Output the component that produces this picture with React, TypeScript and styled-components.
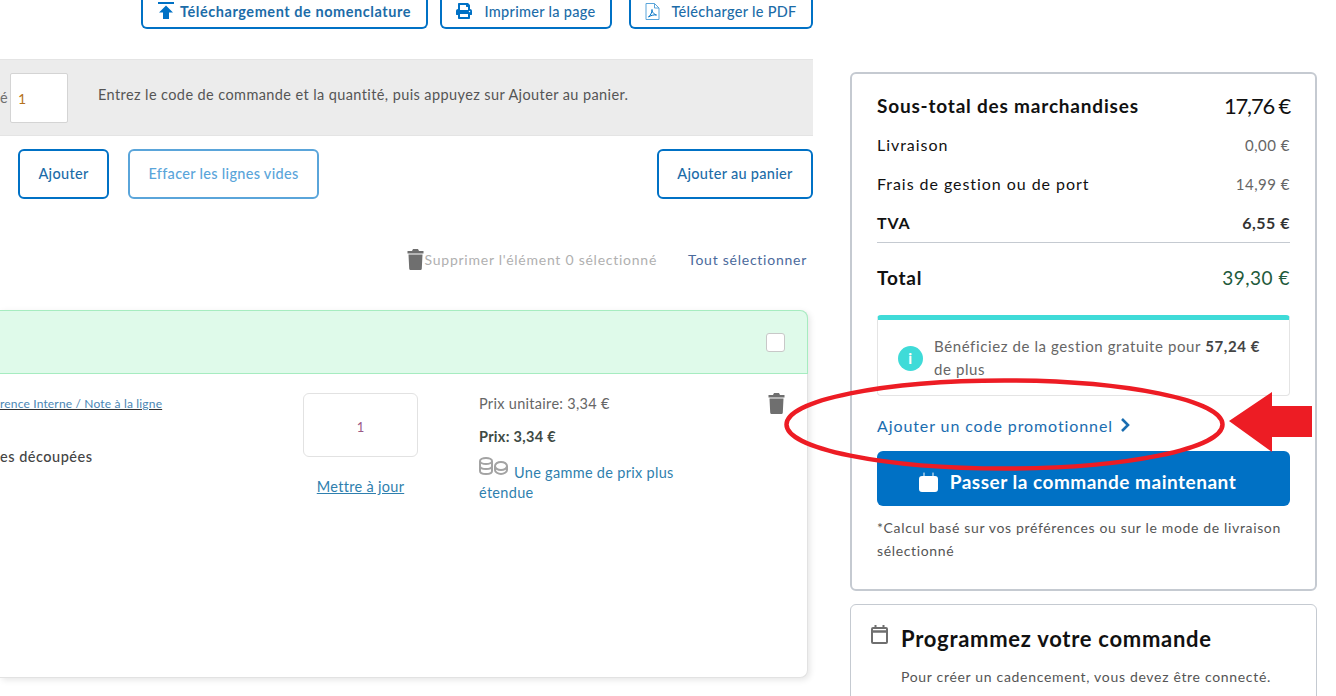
import React from "react";
import styled, { createGlobalStyle } from "styled-components";
import { FaPrint } from "react-icons/fa";

const Colors = {
  blue: "#0071c5",
  blue_light: "#5aa5da",
  text: "#3c3c3c",
  grey: "#6f6f6f",
  panel: "#c5cad1",
  black: "#111",
};

const GlobalStyle = createGlobalStyle`
  html, body {
    margin: 0;
    padding: 0;
    background: #fff;
    overflow: hidden;
  }
  body {
    font-family: "Lato", "Liberation Sans", sans-serif;
    color: ${Colors.text};
  }
`;

const Page = styled.div`
  position: relative;
  width: 1336px;
  height: 696px;
  overflow: hidden;
`;

const Columns = styled.div`
  display: grid;
  grid-template-columns: 813px 467px;
  column-gap: 37px;
  margin-top: -3px;
`;

const LeftColumn = styled.div`
  display: flex;
  flex-direction: column;
`;

const TopActions = styled.div`
  display: flex;
  justify-content: flex-end;
  height: 32px;
`;

const OutlineButton = styled.button<{ $width: number; $gap?: number; $faded?: boolean }>`
  display: flex;
  align-items: center;
  justify-content: center;
  gap: ${(p) => p.$gap ?? 0}px;
  box-sizing: border-box;
  width: ${(p) => p.$width}px;
  height: 50px;
  padding: 0 0 2px;
  background: #fff;
  border: 2px solid ${(p) => (p.$faded ? Colors.blue_light : Colors.blue)};
  border-radius: 6px;
  color: ${(p) => (p.$faded ? Colors.blue_light : "#1c6ca8")};
  font-family: inherit;
  font-size: 14.5px;
  font-weight: 500;
  letter-spacing: 0.3px;
`;

const TopButton = styled(OutlineButton)<{ $left: number; $strong?: boolean }>`
  height: 32px;
  margin-left: ${(p) => p.$left}px;
  border-top: 0;
  border-radius: 0 0 6px 6px;
  font-weight: ${(p) => (p.$strong ? 700 : 500)};
  letter-spacing: ${(p) => (p.$strong ? 0.55 : 0.3)}px;
`;

const QuickBand = styled.div`
  display: flex;
  align-items: center;
  box-sizing: border-box;
  height: 77px;
  margin-top: 30px;
  background: #ececec;
  border-top: 1px solid #e4e4e4;
  border-bottom: 1px solid #e4e4e4;
  font-size: 14.5px;
  letter-spacing: 0.4px;
`;

const ClippedLabel = styled.span`
  width: 10px;
  color: ${Colors.grey};
`;

const QuantityField = styled.div`
  box-sizing: border-box;
  display: flex;
  align-items: center;
  width: 58px;
  height: 50px;
  padding: 2px 0 0 7px;
  background: #fff;
  border: 1px solid #d4d4d4;
  border-radius: 2px;
  color: #b5721c;
  font-size: 14px;
`;

const BandHint = styled.span`
  margin-left: 30px;
  margin-top: -6px;
  color: #555;
`;

const ActionRow = styled.div`
  display: flex;
  align-items: center;
  gap: 19px;
  height: 50px;
  margin-top: 13px;
  padding-left: 18px;
`;

const PushRight = styled.div`
  margin-left: auto;
`;

const SelectionRow = styled.div`
  display: flex;
  align-items: center;
  height: 24px;
  margin-top: 48px;
  padding-right: 6px;
  justify-content: flex-end;
  font-size: 14px;
  letter-spacing: 0.75px;
`;

const DeleteSelected = styled.span`
  display: flex;
  align-items: center;
  gap: 1px;
  color: #b0b0b0;
`;

const SelectAll = styled.span`
  margin-left: 31px;
  color: #4b6a9c;
`;

const ItemCard = styled.div`
  box-sizing: border-box;
  width: 808px;
  height: 368px;
  margin-top: 39px;
  background: #fff;
  border-right: 1px solid #e2e2e2;
  border-bottom: 1px solid #e2e2e2;
  border-radius: 0 8px 8px 0;
  box-shadow: 2px 2px 6px rgba(0, 0, 0, 0.1);
`;

const CardHeader = styled.div`
  box-sizing: border-box;
  display: flex;
  align-items: center;
  justify-content: flex-end;
  height: 64px;
  margin-right: -1px;
  padding-right: 22px;
  background: #dffaea;
  border: 1px solid #a6ecc0;
  border-left: 0;
  border-radius: 0 8px 0 0;
`;

const Checkbox = styled.div`
  box-sizing: border-box;
  width: 19px;
  height: 19px;
  background: #fff;
  border: 1px solid #c8c8c8;
  border-radius: 3px;
`;

const CardBody = styled.div`
  display: grid;
  grid-template-columns: 303px 115px 1fr auto;
  padding: 19px 22px 0 0;
`;

const DescriptionCol = styled.div`
  display: flex;
  flex-direction: column;
`;

const NoteLink = styled.span`
  padding-top: 1px;
  font-size: 12px;
  line-height: 20px;
  letter-spacing: 0.17px;
  color: #4a86b4;
  text-decoration: underline;
  text-decoration-color: #333;
`;

const ItemName = styled.span`
  margin-top: 33px;
  font-size: 14.5px;
  font-weight: 500;
  line-height: 20px;
  letter-spacing: 0.5px;
  color: #444;
`;

const QtyCol = styled.div`
  display: flex;
  flex-direction: column;
  align-items: center;
`;

const QtyBox = styled.div`
  box-sizing: border-box;
  display: flex;
  align-items: center;
  justify-content: center;
  width: 115px;
  height: 64px;
  padding-top: 3px;
  border: 1px solid #e2e2e2;
  border-radius: 6px;
  color: #9b5a86;
  font-size: 13px;
`;

const UpdateLink = styled.span`
  margin-top: 20px;
  font-size: 14.5px;
  line-height: 20px;
  letter-spacing: 0.3px;
  color: #2f7fae;
  text-decoration: underline;
`;

const PriceCol = styled.div`
  display: flex;
  flex-direction: column;
  width: 216px;
  padding: 1px 0 0 61px;
  font-size: 14.5px;
  letter-spacing: 0.3px;
  line-height: 20px;
`;

const UnitPrice = styled.span`
  color: #666;
`;

const LinePrice = styled.span`
  margin-top: 13px;
  font-weight: 700;
  color: #3e4a44;
`;

const RangeLink = styled.span`
  margin-top: 10px;
  color: #2f7fae;
  svg {
    margin-right: 6px;
    vertical-align: 3px;
  }
`;

const TrashCol = styled.div`
  margin-left: auto;
`;

const RightColumn = styled.div`
  display: flex;
  flex-direction: column;
  gap: 13px;
  margin-top: 75px;
`;

const SummaryPanel = styled.div`
  box-sizing: border-box;
  height: 519px;
  padding: 15px 25px 0;
  border: 2px solid ${Colors.panel};
  border-radius: 6px;
`;

const Row = styled.div<{ $height: number; $line?: boolean; $after?: number }>`
  box-sizing: border-box;
  display: flex;
  align-items: center;
  justify-content: space-between;
  height: ${(p) => p.$height}px;
  margin-bottom: ${(p) => p.$after ?? 0}px;
  ${(p) => p.$line && `border-bottom: 1px solid ${Colors.panel}; padding-bottom: 1px;`}
`;

const Label = styled.span<{ $bold?: boolean; $size: number }>`
  font-size: ${(p) => p.$size}px;
  font-weight: ${(p) => (p.$bold ? 700 : 400)};
  letter-spacing: ${(p) => (p.$bold ? 0.8 : 0.95)}px;
  color: ${Colors.black};
`;

const Amount = styled.span<{ $size: number; $bold?: boolean; $color?: string; $tight?: boolean }>`
  font-size: ${(p) => p.$size}px;
  font-weight: ${(p) => (p.$bold ? 700 : 400)};
  letter-spacing: ${(p) => (p.$tight ? -1.2 : 0.5)}px;
  color: ${(p) => p.$color ?? "#333"};
`;

const InfoBox = styled.div`
  box-sizing: border-box;
  display: flex;
  align-items: center;
  gap: 11px;
  height: 81px;
  margin-top: 4px;
  padding: 1px 20px 0;
  border: 1px solid #e4e4e4;
  border-top: 5px solid #3fdbd8;
  border-radius: 4px;
  font-size: 15px;
  line-height: 23px;
  letter-spacing: 0.6px;
  color: #666;
  b {
    color: #444;
  }
`;

const InfoDot = styled.span`
  flex: none;
  display: flex;
  align-items: center;
  justify-content: center;
  width: 25px;
  height: 25px;
  border-radius: 50%;
  background: #3fdbd8;
  color: #fff;
  font-size: 15px;
  font-weight: 700;
`;

const PromoLink = styled.div`
  box-sizing: border-box;
  display: flex;
  align-items: center;
  gap: 7px;
  height: 55px;
  padding-top: 3px;
  font-size: 16px;
  letter-spacing: 0.9px;
  color: #1a6db0;
`;

const CheckoutButton = styled.button`
  display: flex;
  align-items: center;
  justify-content: center;
  gap: 12px;
  width: 100%;
  height: 55px;
  padding: 6px 12px 0 0;
  background: ${Colors.blue};
  border: 0;
  border-radius: 6px;
  color: #fff;
  font-family: inherit;
  font-size: 19px;
  font-weight: 700;
  letter-spacing: 0.5px;
`;

const Footnote = styled.p`
  margin: 10px 0 0;
  font-size: 14px;
  line-height: 23px;
  letter-spacing: 0.65px;
  color: #555;
`;

const SchedulePanel = styled.div`
  box-sizing: border-box;
  display: flex;
  gap: 13px;
  height: 130px;
  padding: 20px 20px 0;
  border: 1px solid ${Colors.panel};
  border-radius: 6px;
`;

const ScheduleTitle = styled.h2`
  margin: 1px 0 0;
  font-size: 22px;
  font-weight: 700;
  line-height: 26px;
  letter-spacing: 0.72px;
  color: ${Colors.black};
`;

const ScheduleText = styled.p`
  margin: 15px 0 0;
  font-size: 14px;
  line-height: 20px;
  letter-spacing: 0.68px;
  color: #555;
`;

const AnnotationLayer = styled.svg`
  position: absolute;
  inset: 0;
  pointer-events: none;
`;

const UploadIcon = () => (
  <svg width="17" height="18" viewBox="0 0 17 18" fill={Colors.blue}>
    <rect x="0" y="0" width="16" height="2" />
    <path d="M8 3.500 15 10.500H11V17H5V10.500H1Z" />
  </svg>
);

const PdfIcon = () => (
  <svg width="15" height="17" viewBox="0 0 15 17" fill="none" stroke={Colors.blue_light} strokeWidth="1">
    <path d="M1 .5H9.500L14 5V16.500H1Z" />
    <path d="M9.500 .5V5H14" />
    <path d="M3.500 14C6 12 7.500 8 7 6.500 6.500 8.500 9 11.500 11.500 12 9 11.500 5.500 12.500 3.500 14Z" stroke={Colors.blue} />
  </svg>
);

const TrashIcon = () => (
  <svg width="17" height="21" viewBox="0 0 17 21" fill={Colors.grey}>
    <path d="M6 0H11L12 2H16.500V4.500H.5V2H5Z" />
    <path d="M1.500 5.500H15.500L14.800 19.500C14.800 20.500 14 21 13 21H4C3 21 2.200 20.500 2.200 19.500Z" />
  </svg>
);

const CoinsIcon = () => (
  <svg width="29" height="18" viewBox="0 0 29 18" fill="none" stroke="#a3a3a3" strokeWidth="2">
    <ellipse cx="7" cy="4" rx="6" ry="3" />
    <path d="M1 4V14C1 16 4 17 7 17 10 17 13 16 13 14V4M1 9C1 11 4 12 7 12 10 12 13 11 13 9" />
    <ellipse cx="22" cy="9" rx="6" ry="4" />
    <path d="M16 9V13C16 15 19 17 22 17 25 17 28 15 28 13V9" />
  </svg>
);

const CalendarIcon = () => (
  <svg width="17" height="19" viewBox="0 0 17 19" fill="none" stroke="#6f6f6f" strokeWidth="2">
    <rect x="1" y="3" width="15" height="15" rx="1" />
    <path d="M1 6.500H16" strokeWidth="2.500" />
    <path d="M4.500 0V3M12.500 0V3" />
  </svg>
);

const BagIcon = () => (
  <svg width="19" height="20" viewBox="0 0 19 20" fill="#fff">
    <path d="M3 4H4.500V1C4.500 .4 5.500 .4 5.500 1V4H13.500V1C13.500 .4 14.500 .4 14.500 1V4H16C18 4 19 5 19 7V17C19 19 18 20 16 20H3C1 20 0 19 0 17V7C0 5 1 4 3 4Z" />
  </svg>
);

const ChevronIcon = () => (
  <svg width="10" height="14" viewBox="0 0 10 14" fill="none" stroke="#1a6db0" strokeWidth="2.600">
    <path d="M2 1 8 7 2 13" />
  </svg>
);

const App = () => {
  return (
    <Page>
      <GlobalStyle />
      <Columns>
        <LeftColumn>
          <TopActions>
            <TopButton $width={287} $left={0} $gap={5} $strong>
              <UploadIcon />
              Téléchargement de nomenclature
            </TopButton>
            <TopButton $width={172} $left={12} $gap={12}>
              <FaPrint size={16} color={Colors.blue} />
              Imprimer la page
            </TopButton>
            <TopButton $width={184} $left={17} $gap={11}>
              <PdfIcon />
              Télécharger le PDF
            </TopButton>
          </TopActions>

          <QuickBand>
            <ClippedLabel>é</ClippedLabel>
            <QuantityField>1</QuantityField>
            <BandHint>Entrez le code de commande et la quantité, puis appuyez sur Ajouter au panier.</BandHint>
          </QuickBand>

          <ActionRow>
            <OutlineButton $width={91}>Ajouter</OutlineButton>
            <OutlineButton $width={191} $faded>
              Effacer les lignes vides
            </OutlineButton>
            <PushRight>
              <OutlineButton $width={156}>Ajouter au panier</OutlineButton>
            </PushRight>
          </ActionRow>

          <SelectionRow>
            <DeleteSelected>
              <TrashIcon />
              Supprimer l'élément 0 sélectionné
            </DeleteSelected>
            <SelectAll>Tout sélectionner</SelectAll>
          </SelectionRow>

          <ItemCard>
            <CardHeader>
              <Checkbox />
            </CardHeader>
            <CardBody>
              <DescriptionCol>
                <NoteLink>rence Interne / Note à la ligne</NoteLink>
                <ItemName>es découpées</ItemName>
              </DescriptionCol>
              <QtyCol>
                <QtyBox>1</QtyBox>
                <UpdateLink>Mettre à jour</UpdateLink>
              </QtyCol>
              <PriceCol>
                <UnitPrice>Prix unitaire: 3,34 €</UnitPrice>
                <LinePrice>Prix: 3,34 €</LinePrice>
                <RangeLink>
                  <CoinsIcon />
                  Une gamme de prix plus étendue
                </RangeLink>
              </PriceCol>
              <TrashCol>
                <TrashIcon />
              </TrashCol>
            </CardBody>
          </ItemCard>
        </LeftColumn>

        <RightColumn>
          <SummaryPanel>
            <Row $height={32} $after={4}>
              <Label $bold $size={19}>Sous-total des marchandises</Label>
              <Amount $size={22} $color={Colors.black} $tight>17,76 €</Amount>
            </Row>
            <Row $height={39}>
              <Label $size={16}>Livraison</Label>
              <Amount $size={15} $color="#666">0,00 €</Amount>
            </Row>
            <Row $height={39}>
              <Label $size={16}>Frais de gestion ou de port</Label>
              <Amount $size={15} $color="#666">14,99 €</Amount>
            </Row>
            <Row $height={40} $line>
              <Label $bold $size={16}>TVA</Label>
              <Amount $size={16} $bold>6,55 €</Amount>
            </Row>
            <Row $height={68}>
              <Label $bold $size={19}>Total</Label>
              <Amount $size={19} $color="#1f5b3c">39,30 €</Amount>
            </Row>
            <InfoBox>
              <InfoDot>i</InfoDot>
              <span>
                Bénéficiez de la gestion gratuite pour <b>57,24 €</b> de plus
              </span>
            </InfoBox>
            <PromoLink>
              Ajouter un code promotionnel
              <ChevronIcon />
            </PromoLink>
            <CheckoutButton>
              <BagIcon />
              Passer la commande maintenant
            </CheckoutButton>
            <Footnote>*Calcul basé sur vos préférences ou sur le mode de livraison sélectionné</Footnote>
          </SummaryPanel>
          <SchedulePanel>
            <CalendarIcon />
            <div>
              <ScheduleTitle>Programmez votre commande</ScheduleTitle>
              <ScheduleText>Pour créer un cadencement, vous devez être connecté.</ScheduleText>
            </div>
          </SchedulePanel>
        </RightColumn>
      </Columns>

      <AnnotationLayer width="1336" height="696" viewBox="0 0 1336 696">
        <ellipse cx="1004.500" cy="424.500" rx="218" ry="44" fill="none" stroke="#ed1c24" strokeWidth="4.500" />
        <path d="M1229 421 1272 392V406H1312V437H1272V452Z" fill="#ed1c24" />
      </AnnotationLayer>
    </Page>
  );
};

export default App;
